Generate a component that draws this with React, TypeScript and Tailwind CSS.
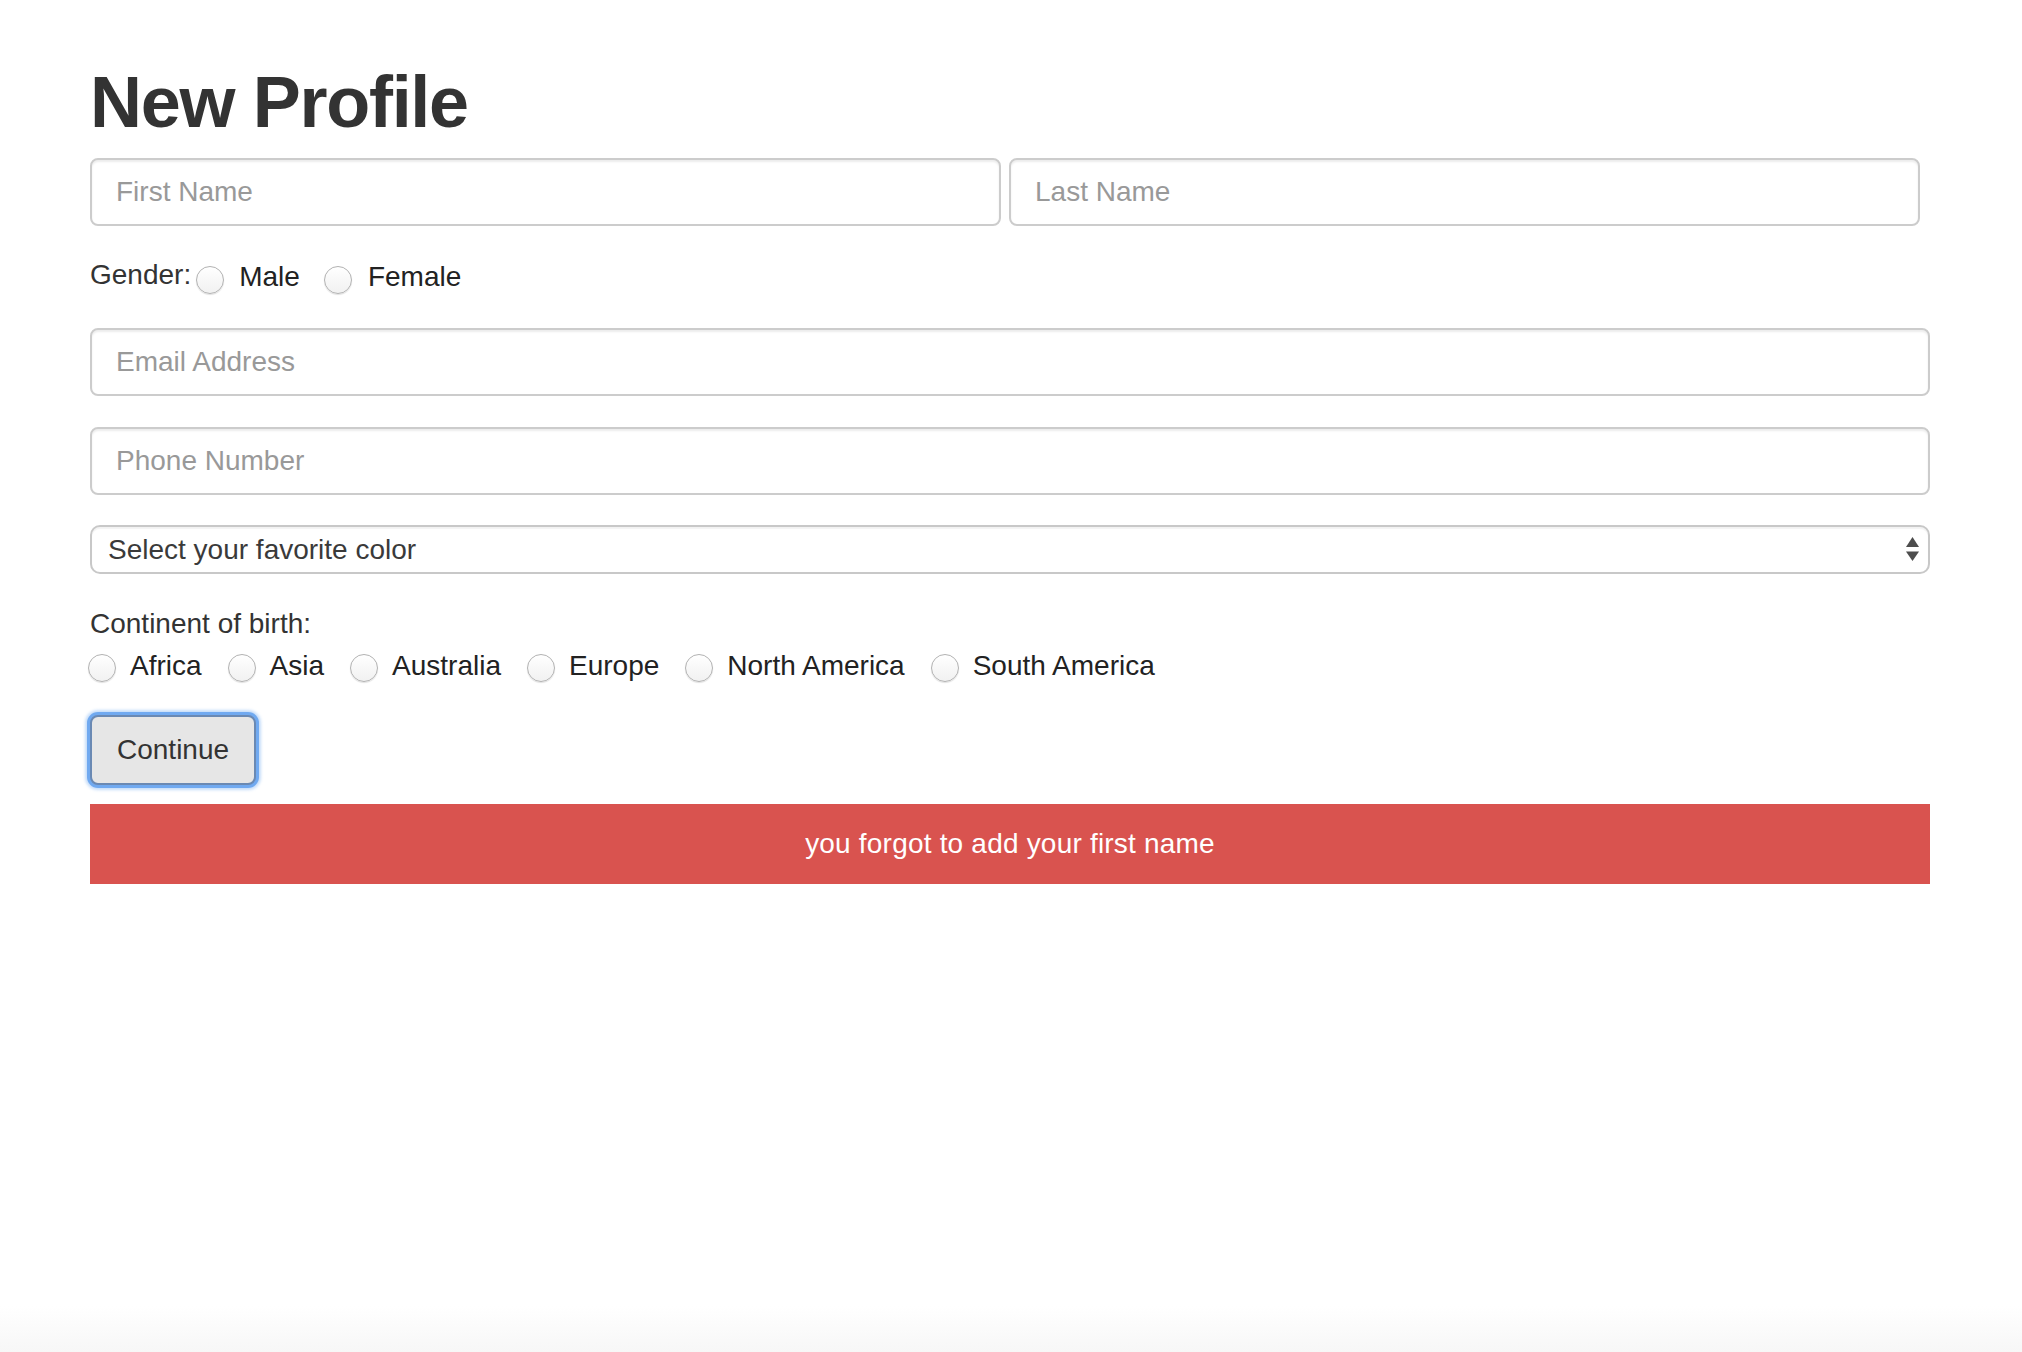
import React from "react";

const inputCls =
  "h-[68px] w-full rounded-[8px] border-2 border-[#cccccc] bg-white px-[24px] text-[28px] text-[#555] shadow-[inset_0_2px_2px_rgba(0,0,0,0.075)] outline-none placeholder:text-[#999]";

const radioCls =
  "h-[28px] w-[28px] shrink-0 appearance-none rounded-full border border-[#b2b2b2] bg-gradient-to-b from-white to-[#f1f1f1] shadow-[0_1px_1px_rgba(0,0,0,0.12)]";

const continents = ["Africa", "Asia", "Australia", "Europe", "North America", "South America"];

const App = () => {
  return (
    <div className="flex h-[1352px] flex-col overflow-hidden bg-white font-['Liberation_Sans',Arial,sans-serif] text-[#333]">
      <div className="flex-1 pl-[90px] pr-[92px] pt-[62px]">
        <h1 className="text-[72px] font-bold leading-[80px] tracking-[-1.3px] text-[#333]">New Profile</h1>

        <div className="mt-[16px] grid grid-cols-2 gap-[8px] pr-[10px]">
          <input type="text" placeholder="First Name" className={inputCls} />
          <input type="text" placeholder="Last Name" className={inputCls} />
        </div>

        {/* gender */}
        <div className="mt-[31px] flex h-[40px] items-start text-[28px] leading-[40px]">
          <span className="-mt-[2px]">Gender:</span>
          <label className="flex items-start">
            <input type="radio" name="gender" className={radioCls + " ml-[5px] mt-[9px]"} />
            <span className="ml-[15px] text-[#222]">Male</span>
          </label>
          <label className="ml-[24px] flex items-start">
            <input type="radio" name="gender" className={radioCls + " mt-[9px]"} />
            <span className="ml-[16px] text-[#222]">Female</span>
          </label>
        </div>

        <input type="email" placeholder="Email Address" className={inputCls + " mt-[31px] block"} />
        <input type="tel" placeholder="Phone Number" className={inputCls + " mt-[31px] block"} />

        <div className="relative mt-[30px]">
          <select className="block h-[49px] w-full appearance-none rounded-[10px] border-2 border-[#c8c8c8] bg-white pl-[16px] text-[28px] text-[#3a3a3a] shadow-[inset_0_2px_1px_rgba(0,0,0,0.05)] outline-none">
            <option>Select your favorite color</option>
            <option>Red</option>
            <option>Green</option>
            <option>Blue</option>
          </select>
          <svg
            width="13"
            height="24"
            viewBox="0 0 13 24"
            className="pointer-events-none absolute right-[11px] top-[12px]"
          >
            <path d="M6.5 0 L13 10 L0 10 Z" fill="#4d4d4d" />
            <path d="M0 14.5 L13 14.5 L6.5 24 Z" fill="#4d4d4d" />
          </svg>
        </div>

        {/* continent */}
        <div className="mt-[30px] text-[28px] leading-[40px]">Continent of birth:</div>
        <div className="-ml-[2px] mt-[2px] flex h-[40px] items-start text-[28px] leading-[40px] text-[#222]">
          {continents.map((c, i) => (
            <label key={c} className={"flex items-start" + (i > 0 ? " ml-[26px]" : "")}>
              <input type="radio" name="continent" className={radioCls + " mt-[8px]"} />
              <span className="ml-[14px]">{c}</span>
            </label>
          ))}
        </div>

        <button
          type="button"
          className="mt-[29px] block h-[70px] rounded-[8px] border-2 border-[#6a89b3] bg-[#e6e6e6] px-[25px] text-[28px] text-[#333] shadow-[0_0_0_3px_#70a9f0,0_0_3px_5px_rgba(112,169,240,0.4)]"
        >
          Continue
        </button>

        <div className="mt-[19px] flex h-[80px] items-center justify-center bg-[#d9534f] text-[28px] tracking-[0.2px] text-white">
          you forgot to add your first name
        </div>
      </div>
      <div className="h-[46px] shrink-0 bg-gradient-to-b from-white to-[#f7f7f7]" />
    </div>
  );
};

export default App;
